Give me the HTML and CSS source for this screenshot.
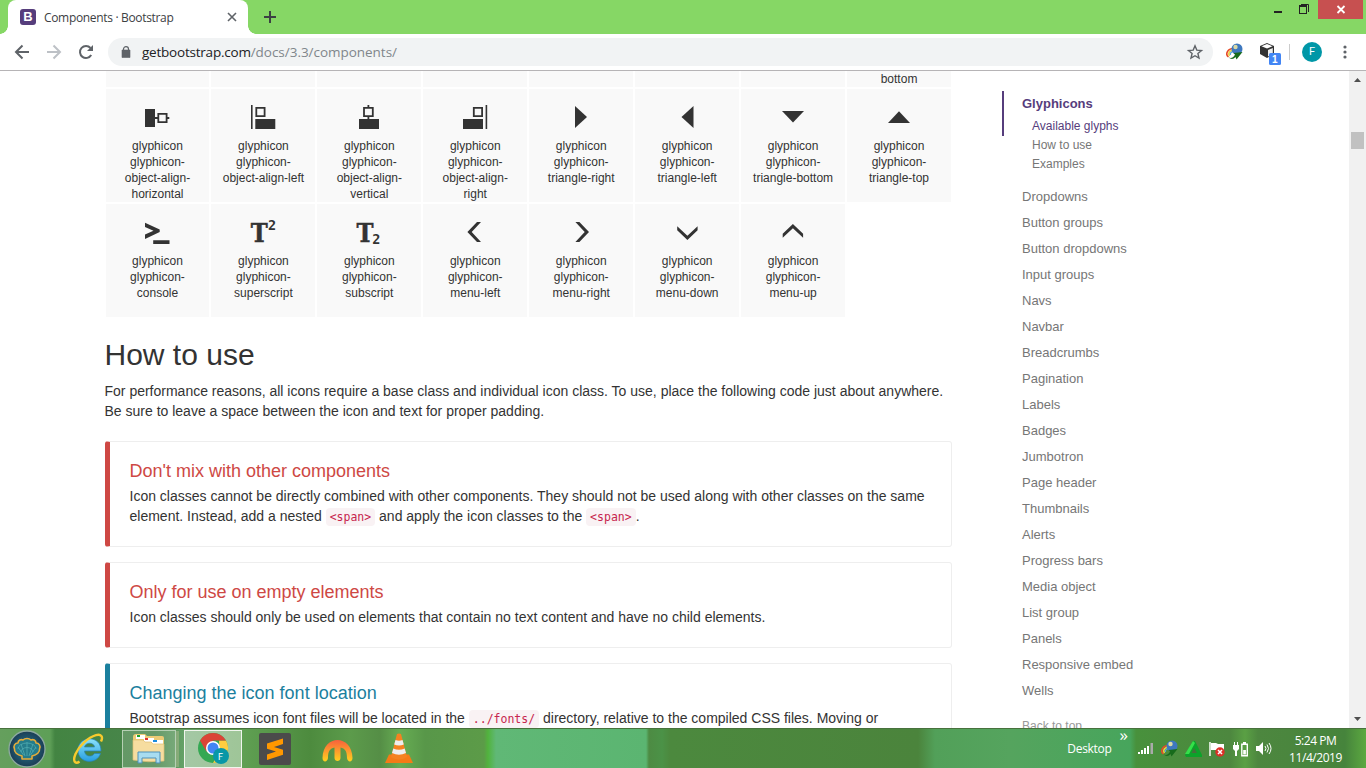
FILE: index.html
```html
<!DOCTYPE html>
<html lang="en">
<head>
<meta charset="utf-8">
<title>Components · Bootstrap</title>
<link rel="stylesheet" href="styles.css">
</head>
<body>
<header class="tabstrip">
  <div class="tab">
    <span class="favicon">B</span>
    <span class="tab-title">Components · Bootstrap</span>
    <svg class="tab-close" width="10" height="10" viewBox="0 0 10 10"><path d="M1 1l8 8M9 1L1 9" stroke="#5f6368" stroke-width="1.6"/></svg>
  </div>
  <svg class="new-tab" width="12" height="12" viewBox="0 0 12 12"><path d="M6 0v12M0 6h12" stroke="#3c4043" stroke-width="2"/></svg>
  <div class="window-controls">
    <svg width="93" height="19" viewBox="0 0 93 19"><path d="M1 11h8v2H1z" fill="#222"/><path d="M26 5h8v9h-8zM27 7v6h6V7z" fill="#222" fill-rule="evenodd"/><path d="M28 4.500h7.500V12" stroke="#222" fill="none"/><path d="M45 0h45v19H45z" fill="#c75050"/><path d="M64.500 6l7 7M71.500 6l-7 7" stroke="#fff" stroke-width="1.800"/></svg>
  </div>
</header>
<div class="toolbar">
  <div class="nav-buttons">
    <svg width="16" height="16" viewBox="0 0 16 16"><path d="M15 8H2M8.500 1.500L2 8l6.500 6.500" fill="none" stroke="#5f6368" stroke-width="2"/></svg>
    <svg width="16" height="16" viewBox="0 0 16 16"><path d="M1 8h13M7.500 1.500L14 8l-6.500 6.500" fill="none" stroke="#bdc1c6" stroke-width="2"/></svg>
    <svg width="16" height="16" viewBox="0 0 16 16"><path d="M13.200 11A6 6 0 1 1 12.500 4" fill="none" stroke="#5f6368" stroke-width="2"/><path d="M15 1v6H9z" fill="#5f6368"/></svg>
  </div>
  <div class="omnibox">
    <svg width="10" height="12" viewBox="0 0 10 12"><path d="M1 4h8v7.500H1z" fill="#5f6368" stroke="#5f6368"  stroke-width=".6"/><path d="M2.500 5V3a2.500 2.300 0 0 1 5 0v2" fill="none" stroke="#5f6368" stroke-width="1.200"/></svg>
    <span class="url">getbootstrap.com<span class="path">/docs/3.3/components/</span></span>
    <svg class="star" width="16" height="16" viewBox="0 0 16 16"><path d="M8 1.800l1.800 4.300 4.700.4-3.600 3 1.100 4.600L8 11.700l-4 2.400 1.100-4.600-3.600-3 4.700-.4z" fill="none" stroke="#5f6368" stroke-width="1.400"/></svg>
  </div>
  <div class="extensions">
    <svg class="ext-globe" width="17" height="17" viewBox="0 0 17 17"><use href="#idm"/></svg>
    <svg class="ext-box" width="22" height="24" viewBox="0 0 22 24"><path d="M1 5l7-3 7 3v8l-7 4-7-4z" fill="#333"/><path d="M2.500 5.200L8 3l5.500 2.200L8 7.500z" fill="#fff"/><path d="M9 9l4.800-2v6L9 15.500z" fill="#eee"/><rect x="10" y="12" width="12" height="12" rx="1.500" fill="#4285f4"/><text x="13" y="22" class="badge-num">1</text></svg>
    <span class="divider"></span>
    <span class="avatar">F</span>
    <svg class="menu-dots" width="4" height="14" viewBox="0 0 4 14"><g fill="#5f6368"><circle cx="2" cy="2" r="1.600"/><circle cx="2" cy="7" r="1.600"/><circle cx="2" cy="12" r="1.600"/></g></svg>
  </div>
</div>

<div class="viewport">
  <div class="page">
    <main class="content">
      <ul class="glyphs">
        <li class="cut"></li><li class="cut"></li><li class="cut"></li><li class="cut"></li><li class="cut"></li><li class="cut"></li><li class="cut"></li><li class="cut">bottom</li>
        <li><svg viewBox="0 0 24 24"><path d="M0 4h10v18H0z"/><path d="M13.300 8.800h8.300v8.300h-8.300zM10 13h3.300M21.600 13h2.700" class="line"/></svg>glyphicon<br>glyphicon-<br>object-align-<br>horizontal</li>
        <li><svg viewBox="0 0 24 24"><path d="M0 0h1.600v24H0zM4.300 14h20v10h-20z"/><path d="M5.300 2.800h8.300v8.300H5.300z" class="line"/></svg>glyphicon<br>glyphicon-<br>object-align-left</li>
        <li><svg viewBox="0 0 24 24"><path d="M2 14h20v10H2z"/><path d="M7 2.800h8.800v8.300H7zM11.400 0v2.500M11.400 11v3" class="line"/></svg>glyphicon<br>glyphicon-<br>object-align-<br>vertical</li>
        <li><svg viewBox="0 0 24 24"><path d="M22.600 0h1.600v24h-1.600zM0 14h20v10H0z"/><path d="M10.800 2.800h8.300v8.300h-8.300z" class="line"/></svg>glyphicon<br>glyphicon-<br>object-align-<br>right</li>
        <li><svg viewBox="0 0 24 24"><path d="M6 1l12 11L6 23z"/></svg>glyphicon<br>glyphicon-<br>triangle-right</li>
        <li><svg viewBox="0 0 24 24"><path d="M18.500 1l-12 11 12 11z"/></svg>glyphicon<br>glyphicon-<br>triangle-left</li>
        <li><svg viewBox="0 0 24 24"><path d="M1 6h22L12 17.500z"/></svg>glyphicon<br>glyphicon-<br>triangle-bottom</li>
        <li><svg viewBox="0 0 24 24"><path d="M1 18h22L12 6.300z"/></svg>glyphicon<br>glyphicon-<br>triangle-top</li>
        <li><svg viewBox="0 0 24 24"><path d="M0 2.700l14.700 6.700v2.600L0 19v-4.400l8.500-3.800L0 7zM8.200 20.300h16.300V24H8.200z"/></svg>glyphicon<br>glyphicon-<br>console</li>
        <li><svg viewBox="0 0 24 24"><text x="-.2" y="22.200" textLength="17" lengthAdjust="spacingAndGlyphs" class="cap">T</text><text x="17" y="10" class="digit">2</text></svg>glyphicon<br>glyphicon-<br>superscript</li>
        <li><svg viewBox="0 0 24 24"><text x="-.5" y="22.200" textLength="17" lengthAdjust="spacingAndGlyphs" class="cap">T</text><text x="15.200" y="23.800" class="digit">2</text></svg>glyphicon<br>glyphicon-<br>subscript</li>
        <li><svg viewBox="0 0 24 24"><path d="M14 2h4L8.700 12 18 22h-4L4.400 12z"/></svg>glyphicon<br>glyphicon-<br>menu-left</li>
        <li><svg viewBox="0 0 24 24"><path d="M6.400 2h4L20 12l-9.600 10h-4l9.300-10z"/></svg>glyphicon<br>glyphicon-<br>menu-right</li>
        <li><svg viewBox="0 0 24 24"><path d="M2.200 6.300v4L12.400 20l10.200-9.700v-4L12.400 15.700z"/></svg>glyphicon<br>glyphicon-<br>menu-down</li>
        <li><svg viewBox="0 0 24 24"><path d="M1.700 17.700v-4L11.900 4l10.200 9.700v4L11.900 8.300z"/></svg>glyphicon<br>glyphicon-<br>menu-up</li>
      </ul>
      <h2>How to use</h2>
      <p class="intro">For performance reasons, all icons require a base class and individual icon class. To use, place the following code just about anywhere. Be sure to leave a space between the icon and text for proper padding.</p>
      <section class="callout danger">
        <h4>Don't mix with other components</h4>
        <p>Icon classes cannot be directly combined with other components. They should not be used along with other classes on the same element. Instead, add a nested <code>&lt;span&gt;</code> and apply the icon classes to the <code>&lt;span&gt;</code>.</p>
      </section>
      <section class="callout danger">
        <h4>Only for use on empty elements</h4>
        <p>Icon classes should only be used on elements that contain no text content and have no child elements.</p>
      </section>
      <section class="callout info">
        <h4>Changing the icon font location</h4>
        <p>Bootstrap assumes icon font files will be located in the <code>../fonts/</code> directory, relative to the compiled CSS files. Moving or</p>
      </section>
    </main>
    <nav class="sidebar">
      <div class="active-group">
        <a class="active">Glyphicons</a>
        <a class="sub current">Available glyphs</a>
        <a class="sub">How to use</a>
        <a class="sub">Examples</a>
      </div>
      <a>Dropdowns</a><a>Button groups</a><a>Button dropdowns</a><a>Input groups</a><a>Navs</a><a>Navbar</a><a>Breadcrumbs</a><a>Pagination</a><a>Labels</a><a>Badges</a><a>Jumbotron</a><a>Page header</a><a>Thumbnails</a><a>Alerts</a><a>Progress bars</a><a>Media object</a><a>List group</a><a>Panels</a><a>Responsive embed</a><a>Wells</a>
      <a class="top-link">Back to top</a>
    </nav>
  </div>
  <div class="scrollbar">
    <svg width="7" height="4" viewBox="0 0 7 4"><path d="M0 4h7L3.500 0z" fill="#505050"/></svg>
    <span class="thumb"></span>
    <svg width="7" height="4" viewBox="0 0 7 4"><path d="M0 0h7L3.500 4z" fill="#505050"/></svg>
  </div>
</div>

<footer class="taskbar">
  <div class="apps">
    <svg class="start" width="38" height="38" viewBox="0 0 38 38"><defs><radialGradient id="orb"><stop offset="0" stop-color="#2f8797"/><stop offset=".6" stop-color="#20566d"/><stop offset="1" stop-color="#1b3d55"/></radialGradient></defs><circle cx="19" cy="19" r="18" fill="url(#orb)" stroke="#8da9a0" stroke-width="1.300"/><path d="M14 29v-3C9 25 6 22 6.500 19 5 16 7 13 10 13c0-3 3-4 5-3 2-2 6-2 8 0 2-1 5 0 5 3 3 0 5 3 3.500 6 .5 3-2.500 6-7.500 7v3z" fill="#257c8b" stroke="#e6ac3a" stroke-width="1.600" stroke-linejoin="round"/><path d="M10 19a9 6 0 0 1 18 0M13 22a6 4.500 0 0 1 12 0M19 26V12M17 26l-4-12M21 26l4-12M15.500 25L10 17M22.500 25l5.500-8" stroke="#4fabb0" stroke-width=".8" fill="none"/></svg>
    <svg class="ie" width="32" height="32" viewBox="0 0 32 32"><defs><linearGradient id="ieblue" x2="0" y2="1"><stop stop-color="#8be2fa"/><stop offset="1" stop-color="#279ee0"/></linearGradient></defs><path d="M28 18H11.500c.5 6 7.500 6.500 10 2.500h6C24 32 5 31 5 17 5 3 28 1 28 18zM11.500 14h10c-.5-5-9-5-10 0z" fill="url(#ieblue)" stroke="#2583bd" stroke-width=".7"/><path d="M6.500 28.500C2 32-.5 28 2.500 21 6 13 15 4.500 23 2.200c5-1.500 7.500 1.300 5 6.300" fill="none" stroke="#f7ca2d" stroke-width="2.400"/></svg>
    <div class="task explorer"><svg width="34" height="32" viewBox="0 0 34 32"><path d="M1 4q0-3 3-3h9l2 2h15q2 0 2 2v22H1z" fill="#edcb76"/><path d="M4 2h9v4H4zM12 5h10v4H12zM20 7h11v4H20z" fill="#fff"/><path d="M5 2h3v2H5z" fill="#1da42a"/><path d="M13 5h3v2h-3z" fill="#d33"/><path d="M21 7h4v2h-4z" fill="#1a8be0"/><path d="M1 7h10l2 2h6l2 2h11v17q-16 2-31-1z" fill="#f6dda0" stroke="#dfbf72" stroke-width=".7"/><path d="M6 30V19h22v11h-4v-5H10v5z" fill="#a8dcf0" stroke="#4e91b9"/></svg></div>
    <div class="task chrome"><svg width="34" height="32" viewBox="0 0 34 32"><circle cx="15" cy="15" r="15" fill="#34a853"/><path d="M28 7.500A15 15 0 0 1 15 30l6.500-11.500L21 7.500z" fill="#ffcd40"/><path d="M2 7.500A15 15 0 0 1 28 7.500H15L8.500 18.700z" fill="#db4437"/><circle cx="15" cy="15" r="7" fill="#fff"/><circle cx="15" cy="15" r="5.500" fill="#4285f4"/><circle cx="23" cy="23" r="8" fill="#0897a7"/><text x="20" y="27" class="chrome-f">F</text></svg></div>
    <svg class="sublime" width="32" height="32" viewBox="0 0 32 32"><rect width="32" height="32" rx="2" fill="#4b4b4b"/><path d="M8 10.500L24 5.500V11l-9 3 9 2.800v5L8 27v-5.500l9-3-9-2.800z" fill="#ff9800"/></svg>
    <svg class="arches" width="31" height="22" viewBox="0 0 31 22"><defs><linearGradient id="flame" x2="0" y2="1"><stop stop-color="#f8603c"/><stop offset="1" stop-color="#ffd21e"/></linearGradient></defs><path d="M.5 18C1-6 30-6 30.500 18c0 4.500-5 4.500-5.500 0 0-7-2-9.500-6.500-10.500V18c0 4-6 4-6 0V7.500C8 8.500 6 11 6 18c-.5 4.500-5.500 4.500-5.500 0z" fill="url(#flame)"/></svg>
    <svg class="vlc" width="28" height="31" viewBox="0 0 28 31"><path d="M4 21.500h20L28 30H0z" fill="#f47b16"/><path d="M12 1q2-1 4 0l6 23q-8 5-16 0z" fill="#f58220"/><path d="M10.500 7q3.500 1.500 7 0l1.300 4.500q-4.800 2-9.600 0zM8.300 15.500q5.700 2.500 11.400 0L21 20q-7 3.500-14 0z" fill="#eee"/></svg>
  </div>
  <div class="tray">
    <span class="desktop-label">Desktop</span><span class="chevron">»</span>
    <svg class="signal" width="16" height="13" viewBox="0 0 16 13"><path d="M0 10h2v2H0zM3 8h2v4H3zM6 6h2v6H6zM9 4h2v8H9z" fill="#fff"/><path d="M12.500 1H15v11h-2.500z" fill="#aaa"/></svg>
    <svg width="17" height="17" viewBox="0 0 17 17"><defs><g id="idm"><path d="M2.500 14C-1 11 1 5.500 9 5" fill="none" stroke="#e64b28" stroke-width="1.600"/><path d="M3.500 13C1.500 10 4 7 9 6.500" fill="none" stroke="#f2d23a" stroke-width="1.500"/><path d="M4.500 12C3.500 10 5.500 8.500 9 8" fill="none" stroke="#55a8d8" stroke-width="1.400"/><circle cx="11" cy="6" r="5.500" fill="#3e78bf"/><circle cx="9.500" cy="4" r="2.200" fill="#d9d9a6"/><path d="M2.500 14.500q4.500 1.500 6.500-3L7.500 10l9-1-6 7.500-1-2.500q-3 3.500-7 .5z" fill="#176b1b"/></g></defs><use href="#idm"/></svg>
    <svg width="17" height="16" viewBox="0 0 17 16"><path d="M8 0h2l7 14v2H1l-1-2z" fill="#0ca32a"/><path d="M8 0l2 2-6 11H0z" fill="#35e04a"/><path d="M9 7l3 5H6.500z" fill="#456f3c"/></svg>
    <svg width="17" height="16" viewBox="0 0 17 16"><path d="M1 1v14" stroke="#fff" stroke-width="1.500"/><path d="M2 2h5l2 1h6v7H9L7 9H2z" fill="#fff"/><circle cx="11" cy="11" r="4.700" fill="#dc3028"/><path d="M9 9l4 4M13 9l-4 4" stroke="#fff" stroke-width="1.500"/></svg>
    <svg width="16" height="16" viewBox="0 0 16 16"><path d="M0 4h6v4L4 10v5H2v-5L0 8zM1 1h1v3H1zM4 1h1v3H4z" fill="#fff"/><path d="M8.800 3.200h5.500v11.500H8.800z" stroke="#fff" stroke-width="1.400" fill="none"/><path d="M10 1h3v2h-3zM10.200 9h2.700v4.500h-2.700z" fill="#fff"/></svg>
    <svg width="16" height="15" viewBox="0 0 16 15"><path d="M0 5h3l4-4v13l-4-4H0z" fill="#fff"/><path d="M9 5q2 2.500 0 5M11 3.500q3 4 0 8M13 2q4 5.500 0 11" stroke="#fff" fill="none"/></svg>
    <div class="clock">5:24 PM<br>11/4/2019</div>
  </div>
</footer>
</body>
</html>
```
FILE: styles.css
```css
* { box-sizing: border-box; }
body { margin: 0; width: 1366px; height: 768px; overflow: hidden; display: flex; flex-direction: column; background: #fff; font-family: "Liberation Sans", Arial, sans-serif; }
svg { display: block; flex: none; overflow: visible; }

.tabstrip { height: 34px; flex: none; background: #86d765; display: flex; align-items: flex-start; padding-left: 8px; font-family: "Open Sans", "Noto Sans", sans-serif; }
.tab { position: relative; width: 240px; height: 34px; background: #fff; border-radius: 8px 8px 0 0; display: flex; align-items: center; padding-left: 12px; }
.tab::before, .tab::after { content: ""; position: absolute; bottom: 0; width: 8px; height: 8px; }
.tab::before { left: -8px; background: radial-gradient(circle at 0 0, #86d765 7.5px, #fff 8px); }
.tab::after { right: -8px; background: radial-gradient(circle at 100% 0, #86d765 7.5px, #fff 8px); }
.favicon { width: 16px; height: 16px; border-radius: 3px; background: #563d7c; color: #fff; font: bold 13px/16px "Liberation Sans", sans-serif; text-align: center; }
.tab-title { margin-left: 8px; width: 183px; font-family: "Open Sans", "Noto Sans", sans-serif; font-size: 12px; letter-spacing: -.33px; color: #3c4043; }
.new-tab { margin: 11px 0 0 16px; }
.window-controls { margin-left: auto; }

.toolbar { height: 37px; flex: none; display: flex; align-items: center; border-bottom: 1px solid #b6b4b6; padding: 0 0 1px 14px; }
.nav-buttons { display: flex; gap: 16px; width: 94px; }
.omnibox { width: 1105px; height: 28px; border-radius: 14px; background: #f1f3f4; display: flex; align-items: center; padding: 0 10px 0 13px; }
.url { margin-left: 11px; font: 13.5px/20px "Open Sans", "Noto Sans", sans-serif; letter-spacing: -.22px; color: #202124; }
.path { color: #80868b; letter-spacing: -.03px; }
.star { margin-left: auto; }
.extensions { display: flex; align-items: center; }
.ext-globe { margin-left: 13px; }
.ext-box { margin: 3px 0 0 16px; }
.badge-num { font: bold 10px "Liberation Sans", sans-serif; fill: #fff; }
.divider { width: 1px; height: 16px; background: #ccc; margin: 0 12px 0 8px; }
.avatar { width: 20px; height: 20px; border-radius: 50%; background: #0097a7; color: #fff; font: 11px/20px Roboto, sans-serif; text-align: center; }
.menu-dots { margin-left: 21px; }

.viewport { flex: 1; min-height: 0; display: flex; overflow: hidden; }
.page { width: 1349px; display: flex; padding-left: 104.500px; overflow: hidden; }
.content { width: 847.500px; flex: none; color: #333; }
.glyphs { list-style: none; margin: 0 0 20px; padding: 0; display: grid; grid-template-columns: repeat(8, 1fr); grid-template-rows: 17px 115px 115px; }
.glyphs li { border: 1px solid #fff; background: #f9f9f9; padding-top: 16px; font-size: 12px; line-height: 16px; text-align: center; overflow: hidden; }
.glyphs li.cut { padding: 0; border-top: 0; }
.glyphs svg { width: 24px; height: 24px; margin: 0 auto 9px; fill: #333; }
.glyphs .line { fill: none; stroke: #333; stroke-width: 1.800; }
.cap { font: bold 25.500px "DejaVu Serif", serif; stroke: #333; stroke-width: .5; }
.digit { font: bold 13.500px "DejaVu Sans Mono", monospace; }

h2 { margin: 0 0 10px; font-size: 30px; font-weight: 400; line-height: 33px; }
p { margin: 0; font-size: 14px; line-height: 20px; }
.intro { margin-bottom: 20px; }
.callout { border: 1px solid #eee; border-left: 5px solid #ce4844; border-radius: 3px; padding: 20px; margin-bottom: 15px; }
.callout h4 { margin: 0 0 5px; font-size: 18px; font-weight: 400; line-height: 19px; color: #ce4844; }
.callout.info { border-left-color: #1b809e; }
.callout.info h4 { color: #1b809e; }
code { font: 11.500px/17px "DejaVu Sans Mono", monospace; padding: 2px 4px; color: #c7254e; background: #f9f2f4; border-radius: 4px; }

.sidebar { margin-left: 50px; padding-top: 20px; width: 260px; flex: none; font-size: 13px; color: #767676; }
.sidebar a { display: block; padding: 4px 20px; line-height: 18px; }
.sidebar .active-group { padding-bottom: 10px; }
.sidebar .active { padding: 4px 18px; border-left: 2px solid #563d7c; color: #563d7c; font-weight: bold; }
.sidebar .sub { padding: 1px 30px; font-size: 12px; line-height: 17px; }
.sidebar .current { padding-left: 28px; border-left: 2px solid #563d7c; color: #563d7c; }
.sidebar .top-link { margin-top: 9px; font-size: 12px; color: #999; }

.scrollbar { width: 17px; flex: none; background: #f1f1f1; display: flex; flex-direction: column; align-items: center; padding: 7px 0 7px; }
.thumb { width: 13px; height: 17px; margin: 50px 1px auto 0; background: #c1c1c1; }

.taskbar { height: 40px; flex: none; border-top: 1px solid #48713d; display: flex; justify-content: space-between; color: #fff; font-family: "Open Sans", sans-serif; background: linear-gradient(90deg, #659f5d 0, #5e9f57 50px, #438442 55px, #49864c 155px, #67a369 185px, #5f9f52 245px, #4d8b3e 310px, #5c9b4b 350px, #558e46 380px, #67ad53 400px, #589749 425px, #5c9b48 484px, #51b33d 488px, #60b876 496px, #5bb571 646px, #4d8b43 649px, #4b9247 662px, #4c893e 670px, #4b843c 918px, #52a059 935px, #55a45e 1010px, #47a55c 1130px, #48913c 1136px, #4d873f 1230px, #5aa044 1245px, #4d873f 1258px, #46843c 1345px, #5ca940 1366px); }
.apps { display: flex; align-items: center; padding-left: 8px; }
.ie { margin-left: 27px; }
.task { height: 38px; display: flex; align-items: center; justify-content: center; }
.explorer { width: 54px; margin-left: 17px; border: 1px solid #b6d0b4; background: rgba(255,255,255,.16); box-shadow: 4px 0 0 -1px #86ab78; }
.chrome { width: 58px; margin-left: 8px; border: 1px solid #f0f5ed; background: rgba(255,255,255,.4); }
.chrome svg { margin-left: 3px; }
.chrome-f { font: 9px Roboto, sans-serif; fill: #fff; }
.sublime { margin-left: 17px; }
.arches { margin-left: 31px; margin-top: 4px; }
.vlc { margin-left: 32px; }
.tray { display: flex; align-items: center; gap: 7px; padding-right: 24px; }
.desktop-label { font-size: 12px; letter-spacing: -.3px; margin-right: 3px; }
.chevron { font-size: 17px; line-height: 14px; margin: -27px 3px 0 -2px; }
.clock { width: 53px; margin-left: 10px; font-size: 12px; line-height: 17px; letter-spacing: -.45px; text-align: center; white-space: nowrap; }
```
